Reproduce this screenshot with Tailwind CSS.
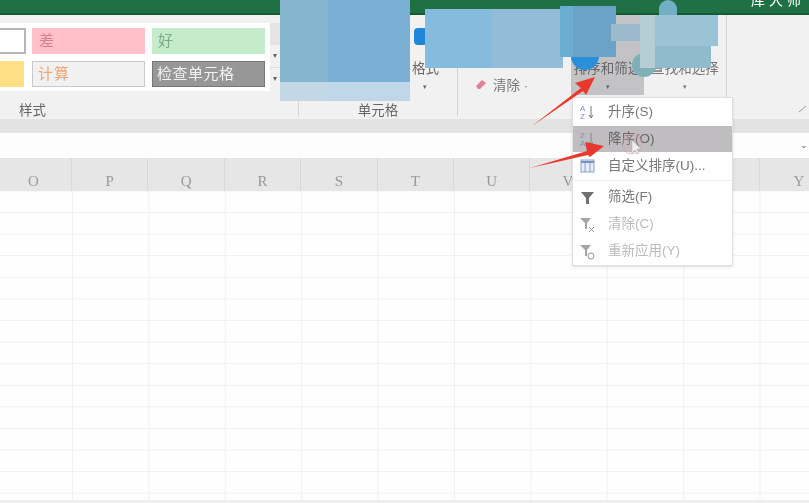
<!DOCTYPE html>
<html lang="zh">
<head>
  <meta charset="UTF-8" />
  <title>排序和筛选</title>
  <script src="https://cdn.jsdelivr.net/npm/@tailwindcss/browser@4"></script>
</head>
<body class="relative w-[809px] h-[503px] overflow-hidden bg-white font-['Liberation_Sans','Noto_Sans_CJK_SC',sans-serif] text-[#555]">

  <!-- title bar -->
  <div class="h-[15px] bg-[#1f7145] border-b-2 border-[#135c35] flex justify-end pr-[4px] overflow-hidden">
    <span class="text-white text-[14px] leading-none tracking-[4px] -mt-[7px] blur-[0.5px]">库大师</span>
  </div>

  <!-- ribbon -->
  <div class="h-[104px] bg-[#f1f1f1] flex text-[13.5px] blur-[0.5px]">
    <div class="w-[299px] border-r border-[#d4d4d4] flex flex-col mb-[3px]">
      <div class="h-[76px] pt-2 flex">
        <div class="w-[270px] h-[68px] bg-white grid grid-cols-[26px_113px_114px] gap-x-[6px] gap-y-[7px] pt-[5px] auto-rows-[26px]">
          <div class="border-2 border-l-0 border-[#b4b6ba] bg-white"></div>
          <div class="bg-[#ffc0ca] text-[#d9808c] text-[15px] px-[7px] leading-[25px]">差</div>
          <div class="ml-px bg-[#c4eccb] text-[#7dab86] text-[15px] px-[6px] leading-[25px]">好</div>
          <div class="bg-[#ffdf85] w-[24px]"></div>
          <div class="bg-[#f1f1f1] border border-[#c9c9c9] text-[#eaa878] text-[15px] px-[5px] leading-[24px] tracking-[1px]">计算</div>
          <div class="ml-px bg-[#979797] border border-[#777] text-[#f1f1f1] text-[15px] px-[4px] leading-[24px] tracking-[0.5px]">检查单元格</div>
        </div>
        <div class="w-[10px] h-[68px] flex flex-col text-[8px] text-[#666] text-center leading-[22px]">
          <div class="h-[22px] bg-[#e4e4e4]"></div>
          <div>▾</div>
          <div class="border-t border-[#ddd]">▾</div>
        </div>
      </div>
      <div class="pl-[19px] pt-[10px] leading-5 text-[#666]">样式</div>
    </div>

    <div class="w-[159px] border-r border-[#d4d4d4] flex flex-col items-center mb-[3px]">
      <div class="h-[76px] w-full flex flex-col items-end pr-[18px] pt-[46px] leading-4 text-[#666]">
        <span>格式</span>
        <span class="w-7 text-center text-[7px] leading-5">▾</span>
      </div>
      <div class="pt-[10px] pr-[0px] leading-5 text-[#666]">单元格</div>
    </div>

    <div class="w-[113px] pl-[17px] pt-[61px] flex items-start gap-[6px] text-[#777]">
      <svg width="12" height="12" viewBox="0 0 12 12" class="mt-[2px]"><path d="M1 8 7 2l4 3-6 6H3z" fill="#e0809a"/></svg>
      <span>清除 ·</span>
    </div>

    <div class="w-[73px] h-[80px] bg-[#c3c2c4] flex flex-col items-center pt-[46px] leading-4 text-[#666]">
      <span class="whitespace-nowrap">排序和筛选</span>
      <span class="text-[7px] leading-5">▾</span>
    </div>
    <div class="w-[83px] border-r border-[#d4d4d4] mb-[3px] flex flex-col items-center pt-[46px] leading-4 text-[#777]">
      <span class="whitespace-nowrap">查找和选择</span>
      <span class="text-[7px] leading-5">▾</span>
    </div>
    <div class="flex-1 flex justify-end items-end pr-[2px] pb-[6px]">
      <svg width="8" height="8" viewBox="0 0 8 8"><path d="M0 7 7 1" stroke="#999" fill="none"/></svg>
    </div>
  </div>

  <div class="h-[14px] bg-[#e3e3e3]"></div>

  <!-- formula bar -->
  <div class="h-[25px] bg-[#fdfdfe] flex justify-end pr-[1px] text-[9px] leading-[25px] text-[#666]">⌄</div>

  <!-- column headers -->
  <div class="h-[33px] bg-[#e6e6e7] flex text-[#999] text-[15px] font-['Liberation_Serif','Noto_Sans_CJK_SC',serif] blur-[0.5px]">
    <div class="w-[72px] pl-[28px] leading-[46px] border-r border-[#d8d8d8]">O</div>
    <div class="w-[76.4px] text-center leading-[46px] border-r border-[#d8d8d8]">P</div>
    <div class="w-[76.4px] text-center leading-[46px] border-r border-[#d8d8d8]">Q</div>
    <div class="w-[76.4px] text-center leading-[46px] border-r border-[#d8d8d8]">R</div>
    <div class="w-[76.4px] text-center leading-[46px] border-r border-[#d8d8d8]">S</div>
    <div class="w-[76.4px] text-center leading-[46px] border-r border-[#d8d8d8]">T</div>
    <div class="w-[76.4px] text-center leading-[46px] border-r border-[#d8d8d8]">U</div>
    <div class="w-[76.4px] text-center leading-[46px] border-r border-[#d8d8d8]">V</div>
    <div class="w-[76.4px] border-r border-[#d8d8d8]"></div>
    <div class="w-[76.4px] border-r border-[#d8d8d8]"></div>
    <div class="flex-1 pl-[34px] leading-[46px]">Y</div>
  </div>

  <!-- sheet grid -->
  <div class="h-[309px] bg-[#fefefe] bg-[linear-gradient(#f0f0f0_1px,transparent_1px),linear-gradient(90deg,#f0f0f0_1px,transparent_1px)] bg-[size:76.4px_21.6px] bg-[position:72px_21px]"></div>
  <div class="h-[3px] bg-[#f0efed]"></div>

  <!-- ribbon icons showing round the patches -->
  <div class="absolute left-[414px] top-[28px] w-[14px] h-[17px] bg-[#1f86d8] rounded-sm"></div>
  <div class="absolute left-[571px] top-[48px] w-[28px] h-[22px] rounded-b-full bg-[#2b8ed9]"></div>
  <div class="absolute left-[632px] top-[53px] w-[24px] h-[24px] rounded-full bg-[#7fb0b8]"></div>

  <!-- blurred-out patches over the ribbon -->
  <div class="absolute left-[280px] top-0 w-[48px] h-[82px] bg-[#86b5cf]"></div>
  <div class="absolute left-[328px] top-0 w-[82px] h-[82px] bg-[#79b0d4]"></div>
  <div class="absolute left-[280px] top-[82px] w-[48px] h-[19px] bg-[#c3d8e7]"></div>
  <div class="absolute left-[328px] top-[82px] w-[82px] h-[19px] bg-[#bfd7e8]"></div>
  <div class="absolute left-[425px] top-[9px] w-[67px] h-[59px] bg-[#85bbdc]"></div>
  <div class="absolute left-[492px] top-[9px] w-[71px] h-[59px] bg-[#94bbd7]"></div>
  <div class="absolute left-[560px] top-[6px] w-[13px] h-[51px] bg-[#6cadd2]"></div>
  <div class="absolute left-[573px] top-[6px] w-[43px] h-[51px] bg-[#6ba3c7]"></div>
  <div class="absolute left-[611px] top-[24px] w-[29px] h-[17px] bg-[#9bbacb]"></div>
  <div class="absolute left-[659px] top-0 w-[18px] h-[20px] rounded-t-full bg-[#74afc6]"></div>
  <div class="absolute left-[640px] top-[15px] w-[15px] h-[53px] bg-[#b6cdd5]"></div>
  <div class="absolute left-[655px] top-[15px] w-[63px] h-[31px] bg-[#9cc2d6]"></div>
  <div class="absolute left-[655px] top-[46px] w-[56px] h-[22px] bg-[#90bacd]"></div>

  <!-- sort dropdown -->
  <div class="absolute left-[572px] top-[97px] w-[161px] h-[169px] bg-white border border-[#e0e0e0] shadow-sm flex flex-col text-[13.5px] text-[#777] blur-[0.5px]">
    <div class="h-[28px] flex items-center gap-[14px] pl-[7px]">
      <svg width="14" height="16" viewBox="0 0 14 16"><text x="0" y="7" font-size="8" fill="#8092c0">A</text><text x="0" y="15" font-size="8" fill="#8092c0">Z</text><path d="M11 2v11M9 11l2 3 2-3" stroke="#777" fill="none"/></svg>
      <span>升序(S)</span>
    </div>
    <div class="h-[26px] flex items-center gap-[14px] pl-[7px] bg-[#bfbdc0] text-[#666]">
      <svg width="14" height="16" viewBox="0 0 14 16"><text x="0" y="7" font-size="8" fill="#8a8eb5">Z</text><text x="0" y="15" font-size="8" fill="#8a8eb5">A</text><path d="M11 2v11M9 11l2 3 2-3" stroke="#888" fill="none"/></svg>
      <span>降序(O)</span>
    </div>
    <div class="h-[29px] flex items-center gap-[13px] pl-[7px] border-b border-[#eee]">
      <svg width="15" height="14" viewBox="0 0 15 14"><rect x="1" y="1" width="13" height="12" fill="#e6ebf5" stroke="#8fa2c8"/><path d="M1 3h13" stroke="#7a93c2" stroke-width="2"/><path d="M5 4v9M10 4v9" stroke="#8fa2c8"/></svg>
      <span>自定义排序(U)...</span>
    </div>
    <div class="mt-[3px] h-[27px] flex items-center gap-[13px] pl-[7px]">
      <svg width="15" height="14" viewBox="0 0 15 14"><path d="M1 1h13L9 7v6H6V7z" fill="#707070"/></svg>
      <span>筛选(F)</span>
    </div>
    <div class="h-[27px] flex items-center gap-[13px] pl-[7px] text-[#bbb]">
      <svg width="15" height="16" viewBox="0 0 15 16"><path d="M0 1h11L7 6v6H5V6z" fill="#a5a5a5"/><path d="M9 10l5 5M14 10l-5 5" stroke="#999"/></svg>
      <span>清除(C)</span>
    </div>
    <div class="h-[27px] flex items-center gap-[13px] pl-[7px] text-[#bbb]">
      <svg width="15" height="16" viewBox="0 0 15 16"><path d="M0 1h11L7 6v6H5V6z" fill="#a5a5a5"/><circle cx="11" cy="12" r="3" fill="none" stroke="#999"/></svg>
      <span>重新应用(Y)</span>
    </div>
  </div>

  <!-- mouse pointer -->
  <svg class="absolute left-[620px] top-[131px]" width="24" height="26" viewBox="0 0 24 26">
    <circle cx="12" cy="13" r="10" fill="#d9b0b5" fill-opacity=".25" stroke="#cf9aa0" stroke-opacity=".5"/>
    <path d="M12 9v13l3-3 2 4 2-1-2-4h4z" fill="#efeff0" stroke="#aaa" stroke-width=".5"/>
  </svg>

  <!-- red arrows -->
  <svg class="absolute left-0 top-0 pointer-events-none" width="809" height="503" viewBox="0 0 809 503">
    <path d="M532 126 581 88 575 83 595 77 586 95 583 91Z" fill="#e9392f"/>
    <path d="M530 168 587 151 585 142 604 146 590 157 588 155Z" fill="#e9392f"/>
  </svg>
</body>
</html>
